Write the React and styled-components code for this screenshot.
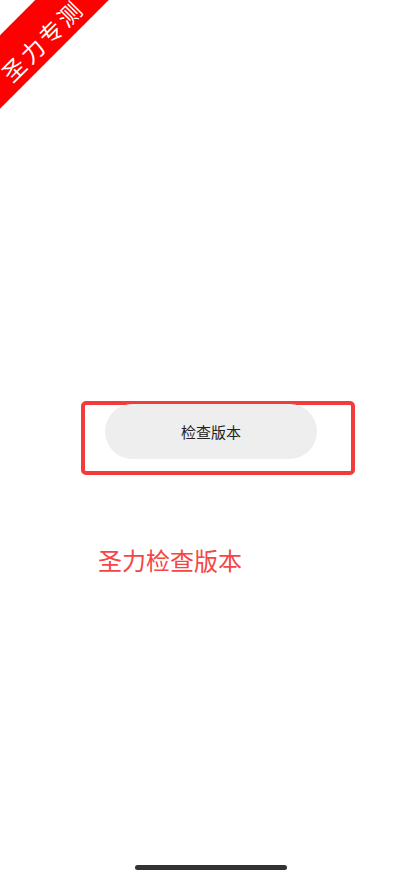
import React from "react";
import styled, { createGlobalStyle } from "styled-components";

const Global = createGlobalStyle`
  html, body { margin: 0; padding: 0; background: #fff; }
  body { font-family: "Noto Sans CJK SC", "Noto Sans", sans-serif; }
  * { box-sizing: border-box; }
`;

const Page = styled.div`
  position: relative;
  width: 420px;
  height: 876px;
  overflow: hidden;
  display: flex;
  flex-direction: column;
  padding: 401px 0 0 81px;
  background: #fff;
`;

const Ribbon = styled.div`
  position: absolute;
  left: -64px;
  top: 10px;
  width: 200px;
  height: 52px;
  background: #ff0000;
  transform: rotate(-45deg);
  display: flex;
  align-items: center;
  justify-content: center;
  padding-top: 15px;
  color: #fff;
  font-size: 23px;
  font-weight: 400;
  letter-spacing: 3px;
  line-height: 1;
  text-indent: 3px;
`;

const Frame = styled.div`
  width: 274px;
  height: 74px;
  border: 4px solid #f43b3b;
  border-radius: 5px;
  padding-left: 20px;
`;

const Button = styled.button`
  width: 212px;
  height: 55px;
  border: none;
  border-radius: 28px;
  background: #eeeeee;
  color: #222;
  font-family: "Noto Sans CJK SC", sans-serif;
  font-size: 15px;
  padding: 0;
  margin-top: -1px;
  cursor: pointer;
`;

const Title = styled.div`
  margin: 69px 0 0 17px;
  font-size: 24px;
  line-height: 32px;
  color: #f54545;
`;

const HomeBar = styled.div`
  margin-top: auto;
  margin-bottom: 6px;
  margin-left: 54px;
  width: 152px;
  height: 5px;
  border-radius: 3px;
  background: #333;
`;

export default function App() {
  return (
    <>
      <Global />
      <Page>
        <Ribbon>圣力专测</Ribbon>
        <Frame>
          <Button>检查版本</Button>
        </Frame>
        <Title>圣力检查版本</Title>
        <HomeBar />
      </Page>
    </>
  );
}
